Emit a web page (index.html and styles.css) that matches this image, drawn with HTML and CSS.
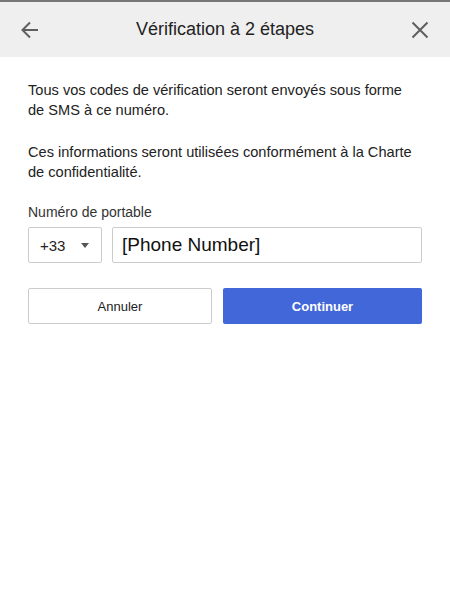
FILE: index.html
```html
<!DOCTYPE html>
<html lang="fr">
<head>
    <meta charset="UTF-8">
    <meta name="viewport" content="width=device-width, initial-scale=1.0">
    <title>Vérification à 2 étapes</title>
    <link rel="stylesheet" href="styles.css">
</head>
<body>
    <div class="dialog">
        <div class="header">
            <button class="icon-button" aria-label="Retour">
                <svg width="20" height="20" viewBox="0 0 20 20">
                    <path d="M18 10H3M10 2.5L2.5 10l7.5 7.5" fill="none" stroke="#5f5f5f" stroke-width="2"/>
                </svg>
            </button>
            <h1>Vérification à 2 étapes</h1>
            <button class="icon-button" aria-label="Fermer">
                <svg width="20" height="20" viewBox="0 0 20 20">
                    <path d="M2.5 2.5l15 15M17.5 2.5l-15 15" fill="none" stroke="#5f5f5f" stroke-width="2"/>
                </svg>
            </button>
        </div>
        <div class="content">
            <p class="blurb">Tous vos codes de vérification seront envoyés sous forme de SMS à ce numéro.</p>
            <p class="blurb">Ces informations seront utilisées conformément à la Charte de confidentialité.</p>
            <label class="field-label" for="phone">Numéro de portable</label>
            <div class="phone-row">
                <div class="country-select">
                    <span>+33</span>
                    <span class="caret"></span>
                </div>
                <input id="phone" class="phone-input" type="text" value="[Phone Number]">
            </div>
            <div class="button-container">
                <button class="button-cancel">Annuler</button>
                <button class="button-continue">Continuer</button>
            </div>
        </div>
    </div>
</body>
</html>
```

FILE: styles.css
```css
body {
    font-family: 'Liberation Sans', Arial, sans-serif;
    background-color: #ffffff;
    margin: 0;
    padding: 0;
    color: #222;
}
.dialog {
    width: 450px;
    height: 600px;
    border-top: 2px solid #777;
    box-sizing: border-box;
}
.header {
    display: flex;
    align-items: center;
    justify-content: space-between;
    height: 55px;
    background-color: #efefef;
    padding: 0 20px;
}
.header h1 {
    flex: 1;
    margin: 0;
    font-size: 18px;
    font-weight: normal;
    color: #222;
    text-align: center;
    padding-top: 0;
}
.icon-button {
    width: 20px;
    height: 20px;
    padding: 0;
    border: none;
    background: none;
    display: flex;
    cursor: pointer;
}
.content {
    padding: 23px 28px 0 28px;
}
.blurb {
    font-size: 14.6px;
    line-height: 20px;
    margin: 0 0 22px 0;
    color: #222;
}
.field-label {
    display: block;
    font-size: 14px;
    color: #333;
    margin-top: 20px;
    margin-bottom: 7px;
}
.blurb + .field-label {
    margin-top: 1px;
}
.phone-row {
    display: flex;
    gap: 10px;
}
.country-select {
    display: flex;
    align-items: center;
    justify-content: space-between;
    width: 74px;
    height: 36px;
    box-sizing: border-box;
    border: 1px solid #ccc;
    border-radius: 2px;
    padding: 0 12px 0 11px;
    font-size: 15px;
    color: #222;
}
.caret {
    width: 0;
    height: 0;
    border-left: 4px solid transparent;
    border-right: 4px solid transparent;
    border-top: 5px solid #555;
}
.phone-input {
    flex: 1;
    height: 36px;
    box-sizing: border-box;
    border: 1px solid #ccc;
    border-radius: 2px;
    padding: 0 9px;
    font-family: 'Liberation Sans', Arial, sans-serif;
    font-size: 19px;
    color: #111;
    outline: none;
}
.button-container {
    display: flex;
    gap: 11px;
    margin-top: 25px;
}
.button-container button {
    flex: 1;
    height: 36px;
    border-radius: 2px;
    font-family: 'Liberation Sans', Arial, sans-serif;
    font-size: 13px;
    cursor: pointer;
}
.button-cancel {
    flex: 0 0 184px !important;
    background-color: #fff;
    border: 1px solid #ccc;
    color: #222;
}
.button-continue {
    background-color: #4167d8;
    border: none;
    color: #fff;
    font-weight: bold;
}
```
